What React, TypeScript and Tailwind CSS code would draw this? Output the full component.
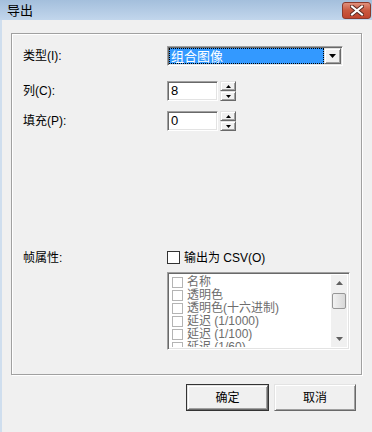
import React from "react";

const font = { fontFamily: '"Liberation Sans", "Noto Sans CJK SC", sans-serif' };

function Sunken({ className, children }: { className: string; children?: React.ReactNode }) {
  return (
    <div
      className={`border border-t-[#a0a0a0] border-l-[#a0a0a0] border-r-white border-b-white shadow-[inset_1px_1px_0_#696969,inset_-1px_-1px_0_#e3e3e3] ${className}`}
    >
      {children}
    </div>
  );
}

function Raised({ className, children }: { className: string; children?: React.ReactNode }) {
  return (
    <div
      className={`flex items-center justify-center bg-[#f0f0f0] border border-t-[#e3e3e3] border-l-[#e3e3e3] border-r-[#696969] border-b-[#696969] shadow-[inset_1px_1px_0_#fff,inset_-1px_-1px_0_#a0a0a0] ${className}`}
    >
      {children}
    </div>
  );
}

function Tri({ up, color = "#000", w = 7 }: { up?: boolean; color?: string; w?: number }) {
  const h = Math.ceil(w / 2);
  return (
    <svg width={w} height={h} viewBox={`0 0 ${w} ${h}`}>
      <polygon points={up ? `0,${h} ${w},${h} ${w / 2},0` : `0,0 ${w},0 ${w / 2},${h}`} fill={color} />
    </svg>
  );
}

function Spin({ value }: { value: string }) {
  return (
    <div className="flex items-center gap-[2px]">
      <Sunken className="w-[51px] h-[20px] bg-white flex items-center pl-[3px] text-[13px]">{value}</Sunken>
      <div className="flex flex-col">
        <Raised className="w-[16px] h-[10px]">
          <Tri up w={5} />
        </Raised>
        <Raised className="w-[16px] h-[10px]">
          <Tri w={5} />
        </Raised>
      </div>
    </div>
  );
}

const items = ["名称", "透明色", "透明色(十六进制)", "延迟 (1/1000)", "延迟 (1/100)", "延迟 (1/60)"];

export default function App() {
  return (
    <div className="w-[372px] h-[432px] flex flex-col bg-[#f0f0f0] overflow-hidden text-black" style={font}>
      <div className="h-[20px] flex items-center justify-between pl-[7px] pr-[1px] bg-gradient-to-b from-[#a4bfdc] to-[#c2d6ec]">
        <span className="text-[13px] leading-none">导出</span>
        <div className="w-[29px] h-[17px] rounded-[3px] border border-[#8b3a2c] bg-gradient-to-b from-[#e0907c] via-[#c9583f] to-[#c0442e] flex items-center justify-center">
          <svg width="14" height="11" viewBox="0 0 14 11">
            <path d="M2 1.5 L12 9.5 M12 1.5 L2 9.5" stroke="#5a2a22" strokeWidth="4" strokeLinecap="square" />
            <path d="M2 1.5 L12 9.5 M12 1.5 L2 9.5" stroke="#fff" strokeWidth="2" strokeLinecap="square" />
          </svg>
        </div>
      </div>

      <div className="flex-1 flex flex-col border-l-2 border-[#cfdeee]">
        <div className="ml-[9px] mt-[13px] w-[351px] h-[342px] border border-[#a0a0a0] shadow-[inset_1px_1px_0_#fff,1px_1px_0_#fff] pl-[11px] pt-[12px] flex flex-col text-[12px]">
          <div className="flex items-center h-[20px]">
            <span className="w-[144px]">类型(I):</span>
            <Sunken className="w-[176px] h-[20px] bg-white flex items-center p-[1px]">
              <div className="flex-1 h-full bg-[#3399ff] text-white outline outline-1 outline-dotted outline-black -outline-offset-1 flex items-center pl-[2px] text-[13px] leading-none">
                组合图像
              </div>
              <Raised className="w-[17px] h-full">
                <Tri />
              </Raised>
            </Sunken>
          </div>
          <div className="flex items-center h-[20px] mt-[15px]">
            <span className="w-[144px]">列(C):</span>
            <Spin value="8" />
          </div>
          <div className="flex items-center h-[20px] mt-[10px]">
            <span className="w-[144px]">填充(P):</span>
            <Spin value="0" />
          </div>
          <div className="flex items-center h-[13px] mt-[120px]">
            <span className="w-[144px]">帧属性:</span>
            <div className="w-[13px] h-[13px] border border-[#333] bg-white" />
            <span className="ml-[4px]">输出为 CSV(O)</span>
          </div>
          <div className="ml-[144px] mt-[8px]">
            <Sunken className="w-[183px] h-[78px] bg-white flex p-[2px]">
              <div className="flex-1 flex flex-col overflow-hidden pl-[2px] pt-[1px] text-[#6d6d6d]">
                {items.map((t) => (
                  <div key={t} className="flex items-center h-[13px] shrink-0 whitespace-nowrap">
                    <div className="w-[11px] h-[11px] border border-[#b4b4b4] mr-[4px]" />
                    <span className="text-[12px] leading-[13px]">{t}</span>
                  </div>
                ))}
              </div>
              <div className="w-[16px] h-full bg-[#f0f0f0] flex flex-col items-center">
                <div className="h-[16px] flex items-center justify-center">
                  <Tri up color="#606060" />
                </div>
                <div className="w-[14px] h-[16px] mt-[2px] rounded-[2px] border border-[#979797] bg-gradient-to-r from-[#f2f2f2] to-[#d8d8d8]" />
                <div className="flex-1" />
                <div className="h-[16px] flex items-center justify-center">
                  <Tri color="#606060" />
                </div>
              </div>
            </Sunken>
          </div>
        </div>

        <div className="flex justify-end gap-[5px] mt-[9px] pr-[16px] text-[12px]">
          <div className="w-[83px] h-[27px] border border-[#333] flex">
            <Raised className="flex-1">确定</Raised>
          </div>
          <Raised className="w-[82px] h-[27px]">取消</Raised>
        </div>
      </div>
    </div>
  );
}
